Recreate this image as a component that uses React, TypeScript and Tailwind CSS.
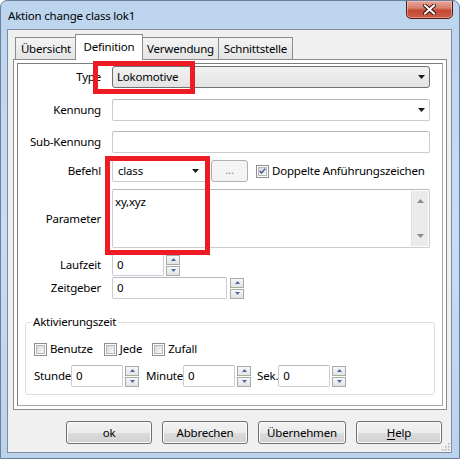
import React from "react";

const winBtn =
  "h-[23px] rounded-[3px] border border-[#707070] bg-[linear-gradient(#f2f2f2_0%,#ebebeb_50%,#dddddd_51%,#cfcfcf_100%)] shadow-[inset_0_0_0_1px_#fcfcfc] flex items-center justify-center text-black";

const field = "h-[22px] rounded-[2px] border border-[#c9ccd2] border-t-[#b4b8bf] bg-white flex items-center";

function DownArrow({ color = "#1a1a1a" }: { color?: string }) {
    return (
        <svg width="7" height="4" viewBox="0 0 7 4">
            <path d="M0 0h7L3.5 4z" fill={color} />
        </svg>
    );
}

function UpArrow({ color = "#1a1a1a" }: { color?: string }) {
    return (
        <svg width="7" height="4" viewBox="0 0 7 4">
            <path d="M3.5 0L7 4H0z" fill={color} />
        </svg>
    );
}

function SpinButtons() {
    return (
        <div className="flex flex-col gap-px">
            <div className="w-[14px] h-[10px] border border-[#a9a9a9] bg-gradient-to-b from-[#f7f7f7] to-[#e3e3e3] flex items-center justify-center">
                <svg width="5" height="3" viewBox="0 0 5 3"><path d="M2.5 0L5 3H0z" fill="#4e64ad" /></svg>
            </div>
            <div className="w-[14px] h-[10px] border border-[#a9a9a9] bg-gradient-to-b from-[#f7f7f7] to-[#e3e3e3] flex items-center justify-center">
                <svg width="5" height="3" viewBox="0 0 5 3"><path d="M0 0h5L2.5 3z" fill="#4e64ad" /></svg>
            </div>
        </div>
    );
}

function Spinner({ width, value }: { width: string; value: string }) {
    return (
        <div className="flex items-center gap-[2px]">
            <div className={`${width} h-[22px] rounded-[2px] border border-[#c9ccd2] border-t-[#b4b8bf] bg-white flex items-center pl-[4px]`}>
                {value}
            </div>
            <SpinButtons />
        </div>
    );
}

function CheckBox({ checked = false }: { checked?: boolean }) {
    return (
        <div className="w-[13px] h-[13px] border border-[#8f8f8f] bg-white p-px shrink-0">
            <div className="w-full h-full border border-[#b4b7bb] bg-gradient-to-br from-[#d8d9db] to-[#f9f9f9] flex items-center justify-center">
                {checked && (
                    <svg width="9" height="8" viewBox="0 0 9 8">
                        <path d="M1 4l2.3 2.5L8 1" stroke="#3c4f91" strokeWidth="1.8" fill="none" />
                    </svg>
                )}
            </div>
        </div>
    );
}

function Label({ children }: { children: React.ReactNode }) {
    return <div className="w-[84px] shrink-0 text-right pr-[1px]">{children}</div>;
}

export default function App() {
    return (
        <div className="w-[460px] h-[459px] overflow-hidden rounded-t-[7px] border border-[#6a7f9c] bg-gradient-to-b from-[#bcd4ed] via-[#c8ddf3] to-[#bcd3ec] font-['Noto_Sans',sans-serif] text-[11.5px] tracking-[-0.2px] leading-[16px] text-black">
            {/* Title bar */}
            <div className="h-[28px] flex items-start justify-between">
                <div className="pl-[7px] pt-[7px]">Aktion change class lok1</div>
                <div className="mr-[6px] -mt-px w-[47px] h-[19px] rounded-b-[5px] border border-[#4f1d1b] bg-[linear-gradient(#e6a596_0%,#d8806e_40%,#c54a35_55%,#cf5a43_100%)] shadow-[inset_0_0_0_1px_rgba(255,210,200,0.5)] flex items-center justify-center">
                    <svg width="13" height="11" viewBox="0 0 13 11">
                        <path d="M2 1.5l9 8M11 1.5l-9 8" stroke="#3a1412" strokeWidth="4" strokeLinecap="square" />
                        <path d="M2 1.5l9 8M11 1.5l-9 8" stroke="#ffffff" strokeWidth="2" strokeLinecap="square" />
                    </svg>
                </div>
            </div>

            {/* Client area */}
            <div className="relative ml-[6px] mr-[7px] h-[424px] border border-[#7d8da3] bg-[#f0f0f0]">
                <div className="ml-[5px] pt-[4px]">
                    {/* Tabs */}
                    <div className="flex items-end pl-[2px] h-[25px] relative z-10">
                        <div className="w-[62px] h-[22px] border border-b-0 border-[#898c95] bg-gradient-to-b from-[#f3f3f3] to-[#e4e4e4] flex items-center justify-center">Übersicht</div>
                        <div className="-mx-[2px] w-[68px] h-[26px] -mb-px border border-b-0 border-[#898c95] bg-white flex items-center justify-center pb-[2px] relative z-10">Definition</div>
                        <div className="w-[78px] h-[22px] border border-b-0 border-l-0 border-[#898c95] bg-gradient-to-b from-[#f3f3f3] to-[#e4e4e4] flex items-center justify-center pl-[2px]">Verwendung</div>
                        <div className="w-[74px] h-[22px] border border-b-0 border-l-0 border-[#898c95] bg-gradient-to-b from-[#f3f3f3] to-[#e4e4e4] flex items-center justify-center">Schnittstelle</div>
                    </div>

                    {/* Tab panel */}
                    <div className="w-[434px] h-[351px] border border-[#898c95] bg-white p-[3px]">
                        <div className="relative h-full border border-[#7d7d7d] border-r-[#a8a8a8] border-b-[#a8a8a8] pt-[2px]">
                            {/* Type */}
                            <div className="flex items-center gap-[10px]">
                                <Label>Type</Label>
                                <div className="w-[318px] h-[22px] rounded-[3px] border border-[#707070] bg-gradient-to-b from-[#f2f2f2] to-[#e3e3e3] flex items-center justify-between pl-[4px] pr-[4px]">
                                    <span>Lokomotive</span>
                                    <DownArrow />
                                </div>
                            </div>
                            {/* Kennung */}
                            <div className="flex items-center gap-[10px] mt-[11px]">
                                <Label>Kennung</Label>
                                <div className={`${field} w-[318px] justify-end pr-[4px]`}>
                                    <DownArrow />
                                </div>
                            </div>
                            {/* Sub-Kennung */}
                            <div className="flex items-center gap-[10px] mt-[10px]">
                                <Label>Sub-Kennung</Label>
                                <div className={`${field} w-[318px]`} />
                            </div>
                            {/* Befehl */}
                            <div className="flex items-center mt-[7px]">
                                <Label>Befehl</Label>
                                <div className={`${field} ml-[10px] w-[94px] justify-between pl-[5px] pr-[6px]`}>
                                    <span>class</span>
                                    <DownArrow />
                                </div>
                                <div className="ml-[5px] w-[37px] h-[22px] rounded-[3px] border border-[#adb2b5] bg-[#f4f4f4] flex items-center justify-center text-[#8a8a8a] pb-[3px]">...</div>
                                <div className="ml-[8px] flex items-center gap-[3px]">
                                    <CheckBox checked />
                                    <span>Doppelte Anführungszeichen</span>
                                </div>
                            </div>
                            {/* Parameter */}
                            <div className="flex items-center gap-[10px] mt-[7px]">
                                <Label>Parameter</Label>
                                <div className="w-[318px] h-[59px] rounded-[2px] border border-[#c9ccd2] border-t-[#b4b8bf] bg-white flex justify-between">
                                    <div className="pl-[2px] pt-[4px]">xy,xyz</div>
                                    <div className="w-[17px] my-px mr-px bg-[#ebebeb] border-l border-[#e0e0e0] flex flex-col items-center justify-between py-[8px]">
                                        <UpArrow color="#8b8b8b" />
                                        <DownArrow color="#8b8b8b" />
                                    </div>
                                </div>
                            </div>
                            {/* Laufzeit */}
                            <div className="flex items-center gap-[10px] mt-[6px]">
                                <Label>Laufzeit</Label>
                                <Spinner width="w-[52px]" value="0" />
                            </div>
                            {/* Zeitgeber */}
                            <div className="flex items-center gap-[10px] mt-px">
                                <Label>Zeitgeber</Label>
                                <div className="flex items-center gap-[3px]">
                                    <div className={`${field} w-[115px] pl-[4px]`}>0</div>
                                    <SpinButtons />
                                </div>
                            </div>

                            {/* Aktivierungszeit */}
                            <fieldset className="mx-[7px] mt-[15px] rounded-[3px] border border-[#d5dfe5] pl-[8px] pb-[7px]">
                                <legend className="-ml-[3px] px-[2px]">Aktivierungszeit</legend>
                                <div className="flex items-center h-[16px] mt-[11px]">
                                    <div className="flex items-center gap-[3px]">
                                        <CheckBox />
                                        <span>Benutze</span>
                                    </div>
                                    <div className="flex items-center gap-[3px] ml-[11px]">
                                        <CheckBox />
                                        <span>Jede</span>
                                    </div>
                                    <div className="flex items-center gap-[3px] ml-[10px]">
                                        <CheckBox />
                                        <span>Zufall</span>
                                    </div>
                                </div>
                                <div className="flex items-center mt-[8px]">
                                    <span>Stunde</span>
                                    <Spinner width="w-[52px]" value="0" />
                                    <span className="ml-[7px]">Minute</span>
                                    <Spinner width="w-[52px]" value="0" />
                                    <span className="ml-[6px]">Sek.</span>
                                    <Spinner width="w-[52px]" value="0" />
                                </div>
                            </fieldset>

                            {/* highlight boxes */}
                            <div className="absolute left-[75px] top-[-3px] w-[102px] h-[33px] border-[5px] border-[#ed1c24]" />
                            <div className="absolute left-[87px] top-[92px] w-[105px] h-[99px] border-[5px] border-[#ed1c24]" />
                        </div>
                    </div>
                </div>

                {/* Buttons */}
                <div className="flex justify-end gap-[10px] pr-[9px] mt-[11px]">
                    <div className={`${winBtn} w-[86px]`}>ok</div>
                    <div className={`${winBtn} w-[86px]`}>Abbrechen</div>
                    <div className={`${winBtn} w-[88px]`}>Übernehmen</div>
                    <div className={`${winBtn} w-[86px]`}><span className="underline underline-offset-2">H</span>elp</div>
                </div>

                {/* size grip */}
                <svg className="absolute right-[1px] bottom-[1px]" width="10" height="10" viewBox="0 0 10 10">
                    {[[8, 2], [8, 5], [5, 5], [8, 8], [5, 8], [2, 8]].map(([x, y], i) => (
                        <rect key={i} x={x} y={y} width="1.5" height="1.5" fill="#b4b4b4" />
                    ))}
                </svg>
            </div>
        </div>
    );
}
